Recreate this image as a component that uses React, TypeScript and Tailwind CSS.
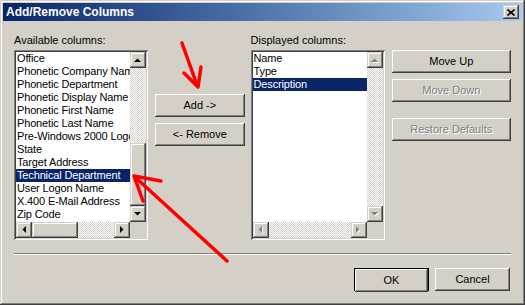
const raised =
  "bg-[#d4d0c8] shadow-[inset_-1px_-1px_#404040,inset_1px_1px_#d4d0c8,inset_-2px_-2px_#808080,inset_2px_2px_#fff]";
const button =
  "bg-[#d4d0c8] shadow-[inset_-1px_-1px_#404040,inset_1px_1px_#fff,inset_-2px_-2px_#808080] flex items-center justify-center h-[23px] text-[11px] text-black";
const disabledText = "text-[#808080] [text-shadow:1px_1px_#fff]";
const track = "bg-[repeating-conic-gradient(#fff_0_25%,#d4d0c8_0_50%)] bg-[length:2px_2px]";

function Arrow({ dir, disabled }: { dir: "up" | "down" | "left" | "right"; disabled?: boolean }) {
  const pts = {
    up: "0,4 7,4 3.5,0.5",
    down: "0,0 7,0 3.5,3.5",
    left: "4,0 4,7 0.5,3.5",
    right: "0,0 0,7 3.5,3.5",
  }[dir];
  const vertical = dir === "up" || dir === "down";
  const w = vertical ? 7 : 4;
  const h = vertical ? 4 : 7;
  return (
    <div className={`${raised} w-[16px] h-[16px] flex items-center justify-center shrink-0`}>
      <svg width={w + 1} height={h + 1} viewBox={`0 0 ${w + 1} ${h + 1}`}>
        {disabled && <polygon points={pts} fill="#fff" transform="translate(1,1)" />}
        <polygon points={pts} fill={disabled ? "#808080" : "#000"} />
      </svg>
    </div>
  );
}

function ListBox({
  items,
  selected,
  enabled,
}: {
  items: string[];
  selected: string;
  enabled?: boolean;
}) {
  return (
    <div className="h-[190px] w-[134px] bg-white shadow-[inset_1px_1px_#808080,inset_-1px_-1px_#fff,inset_2px_2px_#404040,inset_-2px_-2px_#d4d0c8] p-[2px] flex flex-col">
      <div className="flex flex-1 min-h-0">
        <div className="flex-1 overflow-hidden">
          {items.map((it) => (
            <div
              key={it}
              className={`h-[13px] leading-[13px] pl-[1px] text-[11px] tracking-[-0.15px] whitespace-nowrap overflow-hidden ${
                it === selected ? "bg-[#0a246a] text-white" : "text-black"
              }`}
            >
              {it}
            </div>
          ))}
        </div>
        <div className="w-[16px] flex flex-col">
          <Arrow dir="up" disabled={!enabled} />
          {enabled ? (
            <>
              <div className={`h-[75px] ${track}`} />
              <div className={`flex-1 ${raised}`} />
            </>
          ) : (
            <div className={`flex-1 ${track}`} />
          )}
          <Arrow dir="down" disabled={!enabled} />
        </div>
      </div>
      <div className="flex h-[16px]">
        <Arrow dir="left" disabled={!enabled} />
        {enabled ? (
          <>
            <div className={`w-[46px] ${raised}`} />
            <div className={`flex-1 ${track}`} />
          </>
        ) : (
          <div className={`flex-1 ${track}`} />
        )}
        <Arrow dir="right" disabled={!enabled} />
        <div className="w-[16px] bg-[#d4d0c8]" />
      </div>
    </div>
  );
}

export default function App() {
  const available = [
    "Office",
    "Phonetic Company Nam",
    "Phonetic Department",
    "Phonetic Display Name",
    "Phonetic First Name",
    "Phonetic Last Name",
    "Pre-Windows 2000 Logo",
    "State",
    "Target Address",
    "Technical Department",
    "User Logon Name",
    "X.400 E-Mail Address",
    "Zip Code",
  ];
  const displayed = ["Name", "Type", "Description"];

  return (
    <div className="relative w-[525px] h-[305px] overflow-hidden bg-[#d4d0c8] font-['Liberation_Sans',sans-serif] shadow-[inset_-1px_-1px_#404040,inset_1px_1px_#d4d0c8,inset_-2px_-2px_#808080,inset_2px_2px_#fff] pt-[3px] px-[3px]">
      {/* title bar */}
      <div className="h-[18px] flex items-center justify-between bg-gradient-to-r from-[#0a246a] to-[#a6caf0] pl-[3px] pr-[3px]">
        <span className="text-white font-bold text-[12px] leading-[18px]">Add/Remove Columns</span>
        <div className={`${raised} w-[16px] h-[14px] flex items-center justify-center`}>
          <svg width="8" height="7" viewBox="0 0 8 7">
            <path d="M0.5 0.5 L7.5 6.5 M7.5 0.5 L0.5 6.5" stroke="#000" strokeWidth="1.6" />
          </svg>
        </div>
      </div>

      <div className="px-[11px] pt-[13px]">
        <div className="flex">
          <div className="w-[134px]">
            <div className="h-[12px] leading-[12px] text-[11px] text-black mb-[4px]">Available columns:</div>
            <ListBox items={available} selected="Technical Department" enabled />
          </div>

          <div className="ml-[7px] w-[90px] pt-[60px] flex flex-col gap-[6px]">
            <div className={button}>Add -&gt;</div>
            <div className={button}>&lt;- Remove</div>
          </div>

          <div className="ml-[6px] w-[134px]">
            <div className="h-[12px] leading-[12px] text-[11px] text-black mb-[4px]">Displayed columns:</div>
            <ListBox items={displayed} selected="Description" />
          </div>

          <div className="ml-[7px] w-[120px] pt-[16px] flex flex-col">
            <div className={button}>Move Up</div>
            <div className={`${button} mt-[6px]`}>
              <span className={disabledText}>Move Down</span>
            </div>
            <div className={`${button} mt-[16px]`}>
              <span className={disabledText}>Restore Defaults</span>
            </div>
          </div>
        </div>

        <div className="mt-[13px] h-[2px] border-t border-t-[#808080] border-b border-b-white" />

        <div className="flex justify-end gap-[6px] mt-[13px] pr-[1px]">
          <div className="w-[75px] h-[23px] border border-black">
            <div className={`${button} h-[21px]`}>OK</div>
          </div>
          <div className={`${button} w-[75px]`}>Cancel</div>
        </div>
      </div>

      {/* annotation arrows */}
      <svg className="absolute inset-0 pointer-events-none" width="525" height="305">
        <g stroke="#ff0000" strokeWidth="3.5" fill="none" strokeLinecap="round" strokeLinejoin="round">
          <path d="M182 43 L197 85" />
          <path d="M184 73 L198 87 L201 67" />
          <path d="M227 261 L136 178" />
          <path d="M161 181 L134 176 L143 201" />
        </g>
      </svg>
    </div>
  );
}
